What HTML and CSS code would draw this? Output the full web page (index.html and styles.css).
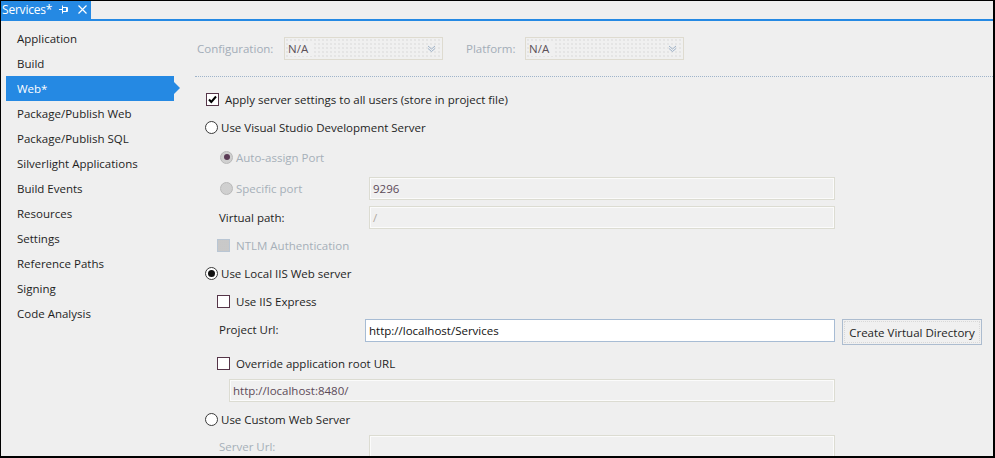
FILE: index.html
```html
<!DOCTYPE html>
<html>
<head>
<meta charset="utf-8">
<link rel="stylesheet" href="styles.css">
</head>
<body>
<div class="frame">
  <div class="tabbar">
    <div class="tab">
      <span class="tab-title">Services*</span>
      <svg class="pin" width="10" height="9" viewBox="0 0 10 9"><path d="M0 4.5H3.5M3.5 0.5V8.5M3.5 2.5H8.5V6.5H3.5M7.5 2.5V6.5" stroke="#fff" stroke-width="1" fill="none"/></svg>
      <svg class="close" width="9" height="9" viewBox="0 0 9 9"><path d="M0.5 0.5L8.5 8.5M8.5 0.5L0.5 8.5" stroke="#fff" stroke-width="1.2" fill="none"/></svg>
    </div>
  </div>
  <div class="main">
    <nav class="sidebar">
      <div class="nav-item">Application</div>
      <div class="nav-item">Build</div>
      <div class="nav-item active">Web*</div>
      <div class="nav-item">Package/Publish Web</div>
      <div class="nav-item">Package/Publish SQL</div>
      <div class="nav-item">Silverlight Applications</div>
      <div class="nav-item">Build Events</div>
      <div class="nav-item">Resources</div>
      <div class="nav-item">Settings</div>
      <div class="nav-item">Reference Paths</div>
      <div class="nav-item">Signing</div>
      <div class="nav-item">Code Analysis</div>
    </nav>
    <section class="content">
      <div class="config-row">
        <span class="dis-label cfg-label">Configuration:</span>
        <div class="combo"><span>N/A</span><svg width="9" height="7" viewBox="0 0 9 7"><path d="M1 1L4.5 4L8 1M1 3.5L4.5 6.5L8 3.5" stroke="#9fb3c9" stroke-width="1" fill="none"/></svg></div>
        <span class="dis-label plat-label">Platform:</span>
        <div class="combo"><span>N/A</span><svg width="9" height="7" viewBox="0 0 9 7"><path d="M1 1L4.5 4L8 1M1 3.5L4.5 6.5L8 3.5" stroke="#9fb3c9" stroke-width="1" fill="none"/></svg></div>
      </div>
      <div class="sep"></div>

      <div class="row r-apply lvl0">
        <span class="check checked first"><svg width="11" height="11" viewBox="0 0 11 11"><path d="M2 5.5L4.3 8L9 2.5" stroke="#000" stroke-width="2" fill="none"/></svg></span>
        <span class="txt">Apply server settings to all users (store in project file)</span>
      </div>
      <div class="row r-visual lvl0">
        <span class="radio"></span>
        <span class="txt">Use Visual Studio Development Server</span>
      </div>
      <div class="row r-auto lvl1r">
        <span class="radio disabled dotted"><span class="dot dis-dot"></span></span>
        <span class="txt dis">Auto-assign Port</span>
      </div>
      <div class="row field r-specific lvl1r">
        <div class="lab"><span class="radio disabled dotted"></span><span class="txt dis">Specific port</span></div>
        <div class="tbox dis-box"><span class="val">9296</span></div>
      </div>
      <div class="row field r-vpath lvl1">
        <div class="lab"><span class="txt">Virtual path:</span></div>
        <div class="tbox dis-box"><span class="val light">/</span></div>
      </div>
      <div class="row r-ntlm lvl1c">
        <span class="check disabled"></span>
        <span class="txt dis">NTLM Authentication</span>
      </div>
      <div class="row r-local lvl0">
        <span class="radio"><span class="dot"></span></span>
        <span class="txt">Use Local IIS Web server</span>
      </div>
      <div class="row r-express lvl1c">
        <span class="check"></span>
        <span class="txt">Use IIS Express</span>
      </div>
      <div class="row field r-project lvl1">
        <div class="lab"><span class="txt">Project Url:</span></div>
        <div class="tbox live"><span class="val">http://localhost/Services</span></div>
        <button class="btn">Create Virtual Directory</button>
      </div>
      <div class="row r-override lvl1c">
        <span class="check"></span>
        <span class="txt">Override application root URL</span>
      </div>
      <div class="row r-rooturl">
        <div class="tbox dis-box wide"><span class="val">http://localhost:8480/</span></div>
      </div>
      <div class="row r-custom lvl0">
        <span class="radio"></span>
        <span class="txt">Use Custom Web Server</span>
      </div>
      <div class="row field r-server lvl1">
        <div class="lab"><span class="txt dis">Server Url:</span></div>
        <div class="tbox dis-box"></div>
      </div>
    </section>
  </div>
</div>
</body>
</html>
```

FILE: styles.css
```css
* { box-sizing: border-box; }
html, body { margin: 0; padding: 0; background: #000; }
body {
  font-family: "Open Sans", "Noto Sans", sans-serif;
  font-size: 11.5px;
  color: #1e1e1e;
}
.frame {
  width: 995px;
  height: 458px;
  background: #efefef;
  border-top: 1px solid #000;
  border-left: 1px solid #000;
  border-right: 2px solid #000;
  border-bottom: 2px solid #000;
  overflow: hidden;
  display: flex;
  flex-direction: column;
}
.tabbar {
  margin: -1px 0 0 -1px;
  height: 21px;
  border-bottom: 2px solid #2589e3;
  display: flex;
  flex: none;
}
.tab {
  background: #2589e3;
  width: 91px;
  height: 19px;
  display: flex;
  align-items: center;
  padding-left: 2px;
  color: #fff;
}
.tab-title { font-size: 12px; letter-spacing: -0.2px; }
.pin { margin-left: 7px; }
.close { margin-left: 9px; }

.main { display: flex; flex: 1; min-height: 0; }
.sidebar {
  width: 194px;
  flex: none;
  padding-top: 5px;
}
.nav-item {
  height: 25px;
  line-height: 25px;
  margin-left: 5px;
  width: 168px;
  padding-left: 11px;
  position: relative;
  white-space: nowrap;
}
.nav-item.active {
  background: #2589e3;
  color: #fff;
}
.nav-item.active::after {
  content: "";
  position: absolute;
  right: -6px;
  top: 6px;
  border-left: 6px solid #2589e3;
  border-top: 6px solid transparent;
  border-bottom: 6px solid transparent;
}

.content { flex: 1; min-width: 0; }
.config-row {
  display: flex;
  align-items: center;
  margin-top: 16px;
  height: 23px;
  padding-left: 2px;
}
.dis-label { color: #a3adb8; }
.cfg-label { width: 87px; }
.plat-label { width: 59px; margin-left: 23px; }
.combo {
  width: 159px;
  height: 23px;
  border: 1px solid #dedbd0;
  display: flex;
  align-items: center;
  justify-content: space-between;
  padding: 0 6px 0 3px;
  color: #5c5058;
  background-image: radial-gradient(circle, #d6d6d6 0.6px, transparent 0.8px);
  background-size: 4px 4px;
  background-color: #f0f0f0;
}
.combo span { background: #f0f0f0; padding-right: 4px; }
.sep {
  margin-top: 16px;
  height: 1px;
  border-top: 1px dotted #9fb4ca;
}

.row { display: flex; align-items: center; white-space: nowrap; }
.lvl0 { padding-left: 10px; }
.lvl1r { padding-left: 25px; }
.lvl1c { padding-left: 22px; }
.lvl1 { padding-left: 24px; }
.r-apply { margin-top: 12px; height: 20px; }
.r-visual { margin-top: 8px; height: 20px; }
.r-auto { margin-top: 10px; height: 20px; }
.r-specific { margin-top: 10px; height: 23px; }
.r-vpath { margin-top: 6px; height: 23px; }
.r-ntlm { margin-top: 6px; height: 20px; }
.r-local { margin-top: 8px; height: 20px; }
.r-express { margin-top: 8px; height: 20px; }
.r-project { margin-top: 8px; height: 26px; align-items: flex-start; }
.r-override { margin-top: 8px; height: 20px; }
.r-rooturl { margin-top: 6px; height: 23px; padding-left: 34px; }
.r-custom { margin-top: 7px; height: 20px; }
.r-server { margin-top: 6px; height: 23px; }

.check {
  width: 13px; height: 13px;
  border: 1px solid #553548;
  background: #fff;
  flex: none;
  display: flex;
  align-items: center;
  justify-content: center;
  margin-right: 6px;
}
.check.first { margin-left: 1px; }
.check.disabled {
  border-color: #b9c6d4;
  background-color: #e6e6e6;
  background-image: radial-gradient(circle, #c8c8c8 0.7px, transparent 0.9px);
  background-size: 2px 2px;
}
.radio {
  width: 13px; height: 13px;
  border-radius: 50%;
  border: 1px solid #3a3a3a;
  background: #fff;
  flex: none;
  display: flex;
  align-items: center;
  justify-content: center;
  margin-right: 3px;
}
.radio.disabled { border-color: #b8b8b8; background: #ebebeb; }
.radio.dotted {
  background-image: radial-gradient(circle, #cfcfcf 0.7px, transparent 0.9px);
  background-size: 2px 2px;
}
.dot { width: 7px; height: 7px; border-radius: 50%; background: #111; }
.dis-dot { background: #5b3b55; width: 6px; height: 6px; }
.txt.dis { color: #a6afb9; }

.field .lab {
  width: 150px;
  flex: none;
  display: flex;
  align-items: center;
  height: 21px;
}
.lvl1r.field .lab { width: 149px; }
.tbox {
  width: 466px;
  height: 23px;
  flex: none;
  display: flex;
  align-items: center;
  padding-left: 3px;
}
.dis-box {
  border: 1px solid #dcdcd2;
  box-shadow: inset 0 0 0 1px #fbfbfb;
  background: #f0f0f0;
  color: #5c4a58;
}
.val.light { color: #b0a8a0; }
.tbox.live {
  border: 1px solid #a7bcd4;
  background: #fff;
  color: #111;
  margin-left: -4px;
  width: 470px;
}
.tbox.wide { width: 606px; }
.btn {
  margin-left: 7px;
  width: 140px;
  height: 26px;
  border: 1px solid #acbccf;
  background: #f0f0f0;
  font: inherit;
  color: #1e1e1e;
  padding: 0;
  outline: 1px dotted #d8d8d8;
  outline-offset: -3px;
}
```
